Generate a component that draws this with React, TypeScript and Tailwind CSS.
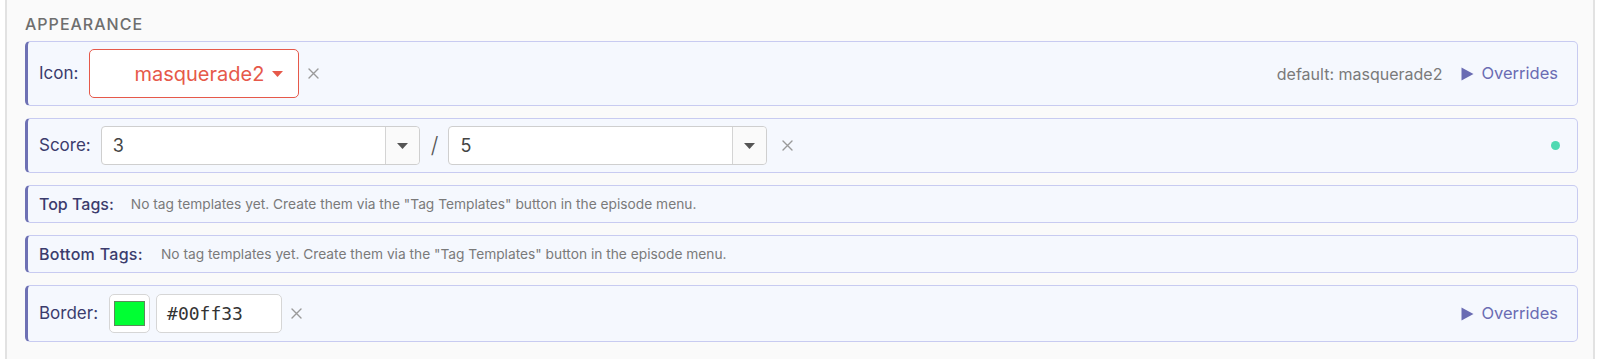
import React from "react";

const XIcon = () => (
  <svg width="11" height="11" viewBox="0 0 11 11" className="shrink-0">
    <path d="M1 1 L10 10 M10 1 L1 10" stroke="#9a9a9a" strokeWidth="1.4" strokeLinecap="round" />
  </svg>
);

const Caret = ({ color }: { color: string }) => (
  <svg width="11" height="6" viewBox="0 0 11 6">
    <path d="M0 0 H11 L5.5 6 Z" fill={color} />
  </svg>
);

const Play = () => (
  <svg width="13" height="14" viewBox="0 0 13 14">
    <path d="M0.5 0.5 L12.5 7 L0.5 13.5 Z" fill="#6a6cb3" />
  </svg>
);

function Row({ h, children }: { h: string; children: React.ReactNode }) {
  return (
    <div
      className={`flex items-center rounded-[5px] border border-[#c8cbf1] border-l-[3px] border-l-[#6e71b4] bg-[#f5f8fe] pl-[11px] pr-[19px] ${h}`}
    >
      {children}
    </div>
  );
}

const Label = ({ children }: { children: React.ReactNode }) => (
  <span className="text-[17px] text-[#3b3c6d] whitespace-nowrap">{children}</span>
);

function ScoreSelect({ value }: { value: string }) {
  return (
    <div className="flex h-[39px] w-[319px] items-stretch rounded-[4px] border border-[#cfcfcf] bg-white">
      <div className="flex flex-1 items-center pl-[11px] text-[18px] text-[#444]">{value}</div>
      <div className="flex w-[34px] items-center justify-center border-l border-[#d4d4d4] bg-[#fafafa] rounded-r-[4px]">
        <Caret color="#555" />
      </div>
    </div>
  );
}

const MSG = 'No tag templates yet. Create them via the "Tag Templates" button in the episode menu.';

export default function App() {
  return (
    <div className="h-[359px] w-[1600px] bg-white px-[5px]" style={{ fontFamily: "Inter, 'Noto Sans', sans-serif" }}>
      <div className="h-full border-x-2 border-[#e2e2e2] bg-[#fafafa] pl-[18px] pr-[15px]">
        <div className="pt-[13px] pb-[6px] text-[16px] leading-[22px] font-medium tracking-[1px] text-[#6e6e6e]">APPEARANCE</div>
        <div className="flex flex-col gap-[12px]">
          <Row h="h-[65px]">
            <Label>Icon:</Label>
            <div className="ml-[11px] flex h-[49px] w-[210px] items-center rounded-[5px] border border-[#e6594a] bg-white pl-[44px]">
              <span className="text-[20px] text-[#e6594a]">masquerade2</span>
              <span className="ml-[8px] mt-[1px]"><Caret color="#e6594a" /></span>
            </div>
            <span className="ml-[9px]"><XIcon /></span>
            <div className="flex-1" />
            <span className="text-[16px] text-[#7a7a7a]">default: masquerade2</span>
            <span className="ml-[19px] flex items-center gap-[7px] text-[16.5px] text-[#6a6cb3]">
              <Play />
              Overrides
            </span>
          </Row>
          <Row h="h-[55px]">
            <Label>Score:</Label>
            <div className="ml-[10px]"><ScoreSelect value="3" /></div>
            <span className="ml-[11px] mr-[10px] text-[22px] text-[#555] font-light">/</span>
            <ScoreSelect value="5" />
            <span className="ml-[15px]"><XIcon /></span>
            <div className="flex-1" />
            <span className="mr-[-2px] h-[9px] w-[9px] rounded-full bg-[#4fd9b2]" />
          </Row>
          <Row h="h-[38px]">
            <span className="text-[16px] font-medium text-[#3b3c6d] whitespace-nowrap">Top Tags:</span>
            <span className="ml-[17px] text-[13.75px] text-[#7a7a7a] whitespace-nowrap">{MSG}</span>
          </Row>
          <Row h="h-[38px]">
            <span className="text-[16px] font-medium tracking-[0.3px] text-[#3b3c6d] whitespace-nowrap">Bottom Tags:</span>
            <span className="ml-[18px] text-[13.75px] text-[#7a7a7a] whitespace-nowrap">{MSG}</span>
          </Row>
          <Row h="h-[57px]">
            <Label>Border:</Label>
            <div className="ml-[11px] flex h-[39px] w-[41px] items-center justify-center rounded-[5px] border border-[#d6d6d6] bg-white">
              <div className="h-[25px] w-[31px] border border-[#5a8a5a] bg-[#00ff33]" />
            </div>
            <div
              className="ml-[6px] flex h-[39px] w-[126px] items-center rounded-[5px] border border-[#d6d6d6] bg-white pl-[10px] text-[18px] text-[#333]"
              style={{ fontFamily: "'DejaVu Sans Mono', monospace" }}
            >
              #00ff33
            </div>
            <span className="ml-[9px]"><XIcon /></span>
            <div className="flex-1" />
            <span className="flex items-center gap-[7px] text-[16.5px] text-[#6a6cb3]">
              <Play />
              Overrides
            </span>
          </Row>
        </div>
      </div>
    </div>
  );
}
